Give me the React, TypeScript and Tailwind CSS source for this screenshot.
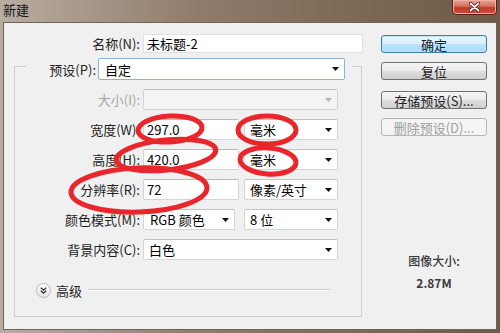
import React from 'react'

const Arrow = ({ disabled }: { disabled?: boolean }) => (
  <svg width="7" height="4" viewBox="0 0 7 4" className="shrink-0">
    <path d="M0 0h7L3.5 4z" fill={disabled ? '#b4b4b4' : '#111'} />
  </svg>
)

function Field({ value, className }: { value: string; className: string }) {
  return (
    <div className={`${className} h-[21px] flex items-center pl-[3px] bg-white border border-[#d4d4d4] border-t-[#b9b9b9] rounded-[2px] text-[13px] leading-none text-black`}>
      {value}
    </div>
  )
}

function Select({ value, className, disabled, focused }: { value?: string; className: string; disabled?: boolean; focused?: boolean }) {
  const border = focused ? 'border-[#8db2d6]' : 'border-[#d4d4d4] border-t-[#c2c2c2]'
  const bg = disabled ? 'bg-[#f4f4f4]' : 'bg-white'
  return (
    <div className={`${className} ${border} ${bg} flex items-center justify-between pl-[5px] pr-[5px] border rounded-[2px] text-[13px] leading-none text-black`}>
      <span>{value}</span>
      <Arrow disabled={disabled} />
    </div>
  )
}

function Row({ label, disabled, children }: { label: string; disabled?: boolean; children: React.ReactNode }) {
  return (
    <div className="mt-[9px] flex items-center h-[21px]">
      <div className={`w-[125px] text-right text-[13px] leading-none ${disabled ? 'text-[#a6a6a6]' : 'text-[#1e1e1e]'}`}>{label}</div>
      <div className="ml-[3px] flex items-center">{children}</div>
    </div>
  )
}

function Button({ label, primary, disabled, className }: { label: string; primary?: boolean; disabled?: boolean; className?: string }) {
  let look = 'border-[#707070] bg-[linear-gradient(#f4f4f4_0%,#ececec_50%,#dedede_51%,#d0d0d0_100%)] text-[#1e1e1e]'
  if (primary) look = 'border-[#3c7fb1] bg-[linear-gradient(#eaf6fd_0%,#d9f0fc_50%,#bee6fd_51%,#a7d9f5_100%)] text-[#1e1e1e] shadow-[inset_0_0_0_1px_#c4e5f6]'
  if (disabled) look = 'border-[#b5b5b5] bg-[#f4f4f4] text-[#a0a0a0]'
  return (
    <div className={`${className ?? ''} ${look} w-[106px] h-[18px] flex items-center justify-center border rounded-[3px] text-[13px] leading-none`}>
      {label}
    </div>
  )
}

export default function App() {
  return (
    <div className="relative w-[500px] h-[333px] overflow-hidden flex flex-col px-[3px] pb-[3px] bg-[linear-gradient(90deg,#b9ada1_0%,#8f7b69_40%,#7a6653_75%,#6e5a48_100%)] font-['Noto_Sans_CJK_SC','Noto_Sans',sans-serif]">
      {/* Title bar */}
      <div className="h-[22px] flex justify-between shrink-0">
        <div className="pt-[3px] text-[13px] leading-none text-[#161616]">新建</div>
        <div className="w-[45px] h-[16px] -mt-px flex items-center justify-center border border-[#5b2118] rounded-b-[4px] bg-[linear-gradient(#e8a596_0%,#d4705e_45%,#c0392b_55%,#c9503c_100%)] shadow-[inset_0_0_0_1px_#f0b0a0]">
          <svg width="11" height="10" viewBox="0 0 11 10">
            <path d="M1.5 1.5l8 7M9.5 1.5l-8 7" stroke="#4a1a14" strokeWidth="3.4" strokeLinecap="round" />
            <path d="M1.5 1.5l8 7M9.5 1.5l-8 7" stroke="#fff" strokeWidth="1.8" strokeLinecap="round" />
          </svg>
        </div>
      </div>

      {/* Body */}
      <div className="flex-1 flex border border-[#6f655c] bg-[#f0f0f0]">
        {/* Left column */}
        <div className="flex flex-col pl-[10px] pt-[11px]">
          <div className="flex items-center h-[19px]">
            <div className="w-[126px] text-right text-[13px] leading-none text-[#1e1e1e]">名称(N):</div>
            <div className="ml-[3px] w-[220px] h-[19px] flex items-center pl-[3px] bg-white border border-[#e0e0e0] text-[13px] leading-none text-black">未标题-2</div>
          </div>

          {/* Group box */}
          <div className="mt-[13px] w-[348px] h-[251px] border border-[#cfcfcf] flex flex-col">
            <div className="-mt-[9px] ml-[11px] w-[326px] h-[22px] bg-[#f0f0f0] flex items-center">
              <div className="w-[70px] text-right text-[13px] leading-none text-[#1e1e1e]">预设(P):</div>
              <Select value="自定" focused className="ml-[2px] w-[247px] h-[22px] !pl-[6px]" />
            </div>

            <Row label="大小(I):" disabled>
              <Select disabled className="w-[195px] h-[21px]" />
            </Row>
            <Row label="宽度(W):">
              <Field value="297.0" className="w-[96px]" />
              <Select value="毫米" className="ml-[5px] w-[94px] h-[21px]" />
            </Row>
            <Row label="高度(H):">
              <Field value="420.0" className="w-[96px]" />
              <Select value="毫米" className="ml-[5px] w-[94px] h-[21px]" />
            </Row>
            <Row label="分辨率(R):">
              <Field value="72" className="w-[96px]" />
              <Select value="像素/英寸" className="ml-[5px] w-[94px] h-[21px]" />
            </Row>
            <Row label="颜色模式(M):">
              <Select value="RGB 颜色" className="w-[92px] h-[21px] !pl-[6px]" />
              <Select value="8 位" className="ml-[9px] w-[94px] h-[21px]" />
            </Row>
            <Row label="背景内容(C):">
              <Select value="白色" className="w-[195px] h-[21px]" />
            </Row>

            {/* Advanced */}
            <div className="mt-[22px] h-[16px] flex items-center pl-[21px] pr-[31px]">
              <div className="w-[15px] h-[15px] rounded-full border border-[#b9b9b9] bg-[linear-gradient(#ffffff,#e4e4e4)] flex items-center justify-center">
                <svg width="7" height="7" viewBox="0 0 7 7">
                  <path d="M0.8 0.8L3.5 3.2L6.2 0.8M0.8 3.8L3.5 6.2L6.2 3.8" stroke="#333" strokeWidth="1.3" fill="none" />
                </svg>
              </div>
              <div className="ml-[5px] text-[13px] leading-none text-[#1e1e1e]">高级</div>
              <div className="ml-[6px] flex-1 h-[2px] border-t border-[#cdcdcd] border-b border-b-white" />
            </div>
          </div>
        </div>

        {/* Right column */}
        <div className="ml-[18px] pt-[12px] flex flex-col">
          <Button label="确定" primary />
          <Button label="复位" className="mt-[9px]" />
          <Button label="存储预设(S)..." className="mt-[11px]" />
          <Button label="删除预设(D)..." disabled className="mt-[9px]" />
          <div className="mt-[117px] text-center text-[12px] leading-[16px] text-[#3a3a3a] font-medium">图像大小:</div>
          <div className="mt-[6px] text-center text-[12px] leading-[16px] text-[#3a3a3a] font-semibold">2.87M</div>
        </div>
      </div>

      {/* Red annotation marks */}
      <svg className="absolute inset-0 pointer-events-none" width="500" height="333" viewBox="0 0 500 333">
        <g fill="none" stroke="#e8262b" strokeWidth="5">
          <ellipse cx="170" cy="129" rx="32" ry="13" transform="rotate(-3 170 129)" />
          <ellipse cx="267" cy="130" rx="29" ry="14" />
          <ellipse cx="166" cy="155" rx="50" ry="15" transform="rotate(-6 166 155)" />
          <ellipse cx="268" cy="161" rx="28" ry="13" transform="rotate(4 268 161)" />
          <ellipse cx="139" cy="190" rx="68" ry="22" transform="rotate(-2 139 190)" />
        </g>
      </svg>
    </div>
  )
}
